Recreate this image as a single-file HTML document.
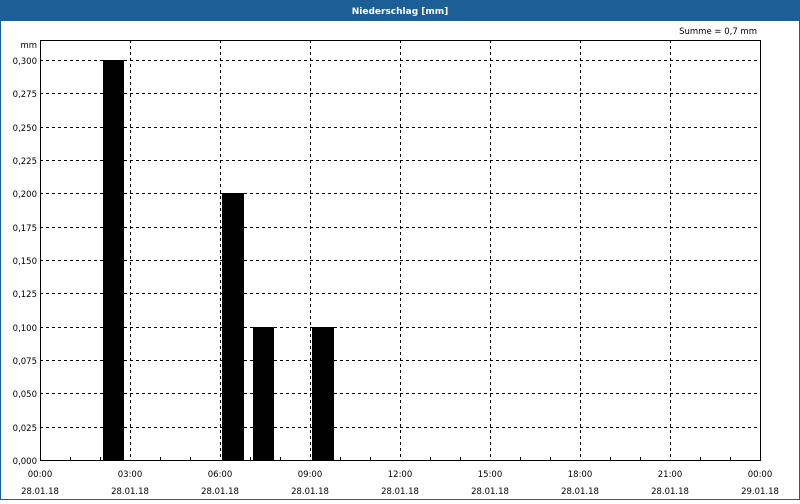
<!DOCTYPE html>
<html><head><style>
body{margin:0;width:800px;height:500px;overflow:hidden;background:#fff;font-family:"DejaVu Sans","Liberation Sans",sans-serif;}
</style></head><body>
<svg width="800" height="500" xmlns="http://www.w3.org/2000/svg" font-family="DejaVu Sans, Liberation Sans, sans-serif" font-size="8.5">
<rect x="0.5" y="0.5" width="799" height="499" fill="#fff" stroke="#1c5f96" stroke-width="1"/>
<rect x="0" y="0" width="800" height="21" fill="#1c5f96"/>
<text x="400" y="14" fill="#fff" font-weight="bold" font-size="9" text-anchor="middle">Niederschlag [mm]</text>
<text x="757" y="34" text-anchor="end">Summe = 0,7 mm</text>
<g stroke="#000" stroke-width="1" stroke-dasharray="3,3">
<line x1="40" x2="760" y1="60.5" y2="60.5"/>
<line x1="40" x2="760" y1="93.5" y2="93.5"/>
<line x1="40" x2="760" y1="127.5" y2="127.5"/>
<line x1="40" x2="760" y1="160.5" y2="160.5"/>
<line x1="40" x2="760" y1="193.5" y2="193.5"/>
<line x1="40" x2="760" y1="227.5" y2="227.5"/>
<line x1="40" x2="760" y1="260.5" y2="260.5"/>
<line x1="40" x2="760" y1="293.5" y2="293.5"/>
<line x1="40" x2="760" y1="327.5" y2="327.5"/>
<line x1="40" x2="760" y1="360.5" y2="360.5"/>
<line x1="40" x2="760" y1="393.5" y2="393.5"/>
<line x1="40" x2="760" y1="427.5" y2="427.5"/>
<line x1="130.5" x2="130.5" y1="40" y2="460"/>
<line x1="220.5" x2="220.5" y1="40" y2="460"/>
<line x1="310.5" x2="310.5" y1="40" y2="460"/>
<line x1="400.5" x2="400.5" y1="40" y2="460"/>
<line x1="490.5" x2="490.5" y1="40" y2="460"/>
<line x1="580.5" x2="580.5" y1="40" y2="460"/>
<line x1="670.5" x2="670.5" y1="40" y2="460"/>
</g>
<g fill="#000">
<rect x="103" y="60" width="21" height="400"/>
<rect x="222" y="193" width="22" height="267"/>
<rect x="253" y="327" width="21" height="133"/>
<rect x="312" y="327" width="22" height="133"/>
</g>
<rect x="40.5" y="40.5" width="720" height="420" fill="none" stroke="#000"/>
<g stroke="#000">
<line x1="70.5" x2="70.5" y1="457" y2="460"/><line x1="100.5" x2="100.5" y1="457" y2="460"/>
<line x1="160.5" x2="160.5" y1="457" y2="460"/><line x1="190.5" x2="190.5" y1="457" y2="460"/>
<line x1="250.5" x2="250.5" y1="457" y2="460"/><line x1="280.5" x2="280.5" y1="457" y2="460"/>
<line x1="340.5" x2="340.5" y1="457" y2="460"/><line x1="370.5" x2="370.5" y1="457" y2="460"/>
<line x1="430.5" x2="430.5" y1="457" y2="460"/><line x1="460.5" x2="460.5" y1="457" y2="460"/>
<line x1="520.5" x2="520.5" y1="457" y2="460"/><line x1="550.5" x2="550.5" y1="457" y2="460"/>
<line x1="610.5" x2="610.5" y1="457" y2="460"/><line x1="640.5" x2="640.5" y1="457" y2="460"/>
<line x1="700.5" x2="700.5" y1="457" y2="460"/><line x1="730.5" x2="730.5" y1="457" y2="460"/>
</g>
<g text-anchor="end">
<text x="37" y="48">mm</text>
<text x="37" y="64">0,300</text><text x="37" y="97">0,275</text><text x="37" y="131">0,250</text>
<text x="37" y="164">0,225</text><text x="37" y="197">0,200</text><text x="37" y="231">0,175</text>
<text x="37" y="264">0,150</text><text x="37" y="297">0,125</text><text x="37" y="331">0,100</text>
<text x="37" y="364">0,075</text><text x="37" y="397">0,050</text><text x="37" y="431">0,025</text>
<text x="37" y="464">0,000</text>
</g>
<g text-anchor="middle">
<text x="40" y="477">00:00</text><text x="40" y="494">28.01.18</text>
<text x="130" y="477">03:00</text><text x="130" y="494">28.01.18</text>
<text x="220" y="477">06:00</text><text x="220" y="494">28.01.18</text>
<text x="310" y="477">09:00</text><text x="310" y="494">28.01.18</text>
<text x="400" y="477">12:00</text><text x="400" y="494">28.01.18</text>
<text x="490" y="477">15:00</text><text x="490" y="494">28.01.18</text>
<text x="580" y="477">18:00</text><text x="580" y="494">28.01.18</text>
<text x="670" y="477">21:00</text><text x="670" y="494">28.01.18</text>
<text x="760" y="477">00:00</text><text x="760" y="494">29.01.18</text>
</g>
</svg>
</body></html>
